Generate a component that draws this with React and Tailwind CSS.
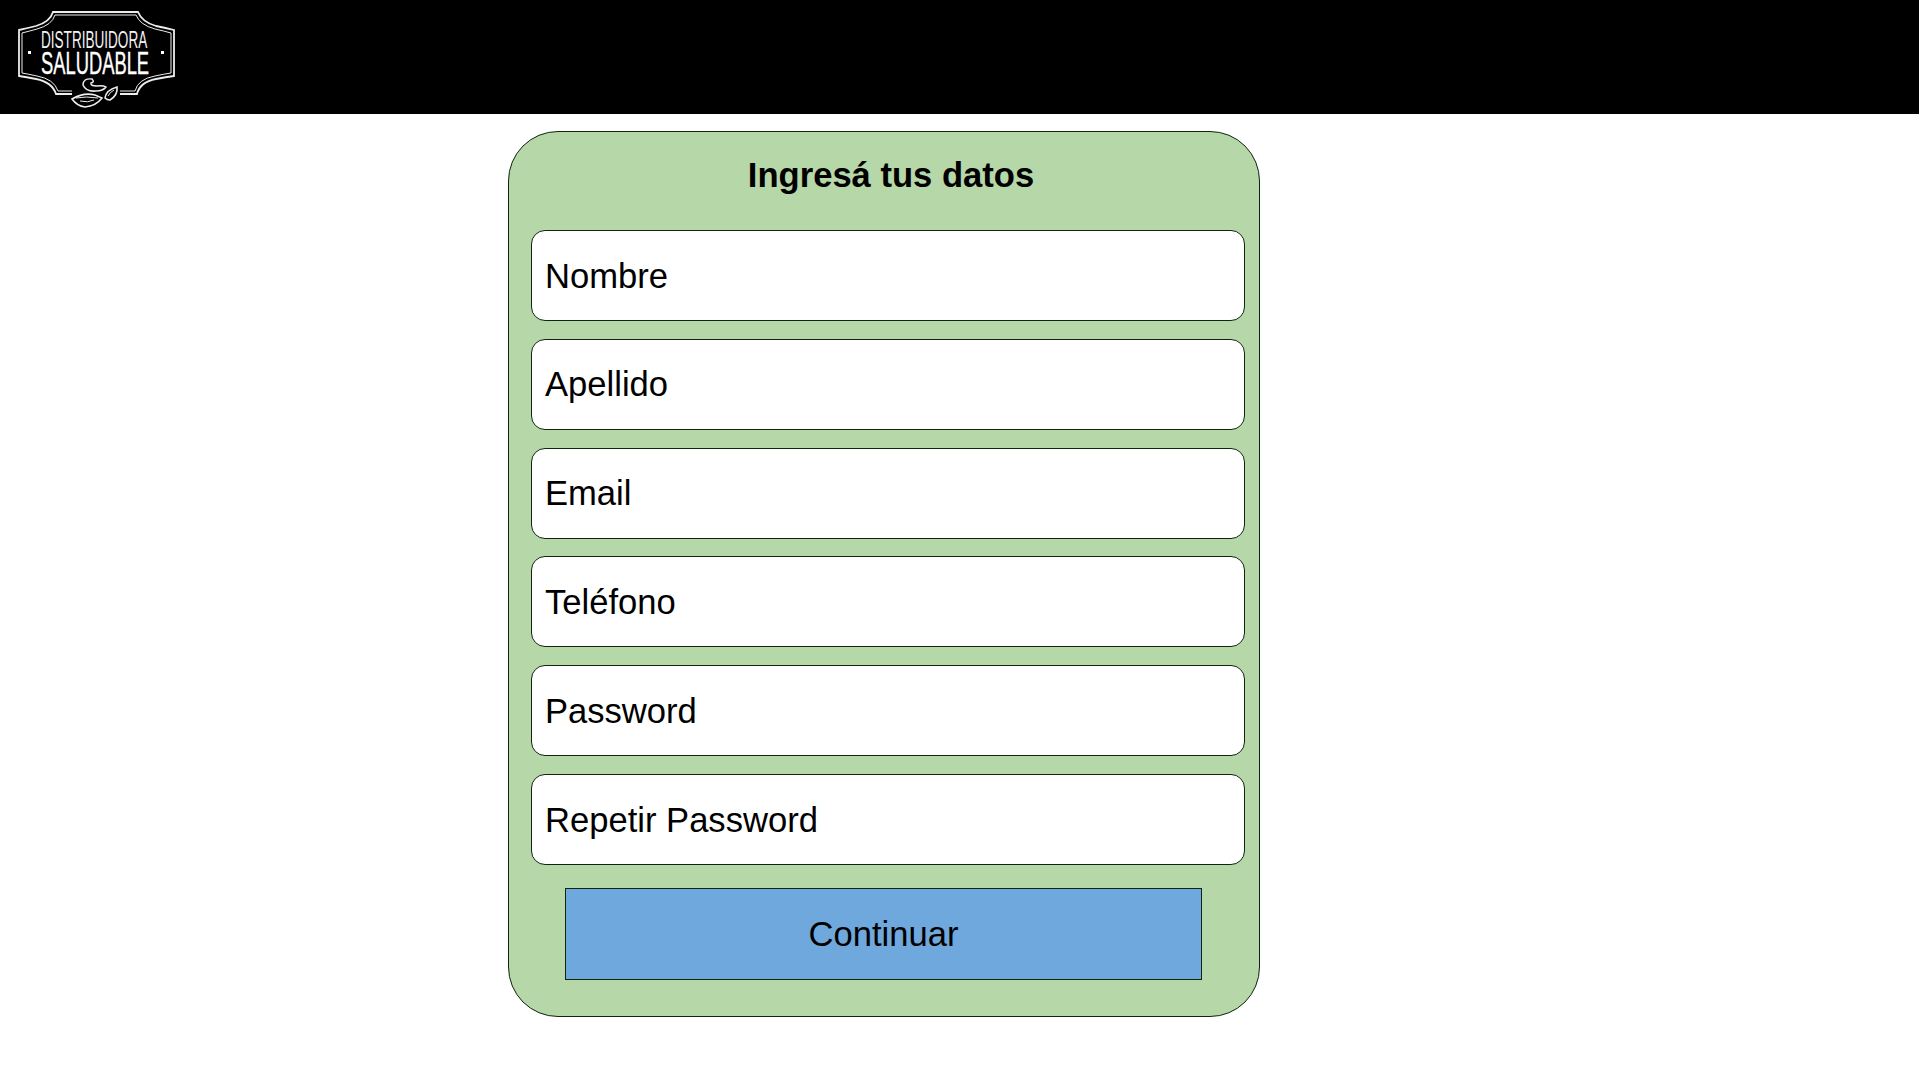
const fields = ["Nombre", "Apellido", "Email", "Teléfono", "Password", "Repetir Password"];

const Logo = () => (
  <svg viewBox="0 0 180 114" className="block w-[180px] h-[114px]" fill="none" stroke="#ededed">
    {/* outer and inner frame */}
    <path
      d="M72 94 H56 Q52 82 36 79 Q26 77 19 76 V30 Q28 28 36 26 Q50 22 53 12 H138 Q142 22 156 26 Q166 28 174 30 V76 Q166 77 156 79 Q140 82 137 94 H120"
      strokeWidth="1.8"
    />
    <path
      d="M72 91 H58 Q54 79 37 76 Q28 74 22 73 V33 Q30 31 37 29 Q52 25 55 15 H136 Q140 25 155 29 Q164 31 171 33 V73 Q164 74 155 76 Q138 79 135 91 H120"
      strokeWidth="1"
    />
    <rect x="28" y="51" width="3" height="3" fill="#fff" stroke="none" />
    <rect x="161" y="51" width="3" height="3" fill="#fff" stroke="none" />
    <text transform="translate(41 48) scale(0.59 1)" fontSize="23" fill="#f2f2f2" stroke="none" fontFamily="'Liberation Sans', sans-serif">
      DISTRIBUIDORA
    </text>
    <text transform="translate(41 74) scale(0.592 1)" fontSize="31" fill="#fff" stroke="#fff" strokeWidth="0.4" fontFamily="'Liberation Sans', sans-serif">
      SALUDABLE
    </text>
    {/* cashew and almonds */}
    <path d="M92 79 Q83 78 83 85 Q86 92 96 91 Q103 91 106 87 Q103 85 97 86 Q90 86 91 83 Q95 82 92 79 Z" strokeWidth="1.5" />
    <path d="M72 99 Q84 92 95 95 L102 98 Q96 106 85 107 Q77 106 72 99 Z" strokeWidth="1.6" />
    <path d="M76 98 Q86 96 98 98 M80 101 Q88 103 94 100" strokeWidth="1" />
    <path d="M105 98 Q106 90 117 87 Q118 95 110 100 Q107 100 105 98 Z" strokeWidth="1.6" />
    <path d="M108 96 Q110 92 114 90" strokeWidth="1" />
  </svg>
);

const App = () => {
  return (
    <div className="min-h-screen bg-white text-black font-['Liberation_Sans',Arial,sans-serif]">
      <header className="h-[114px] bg-black">
        <Logo />
      </header>
      <main className="pt-[17px] pl-[508px]">
        <form className="w-[752px] h-[886px] rounded-[50px] border border-[#10240f] bg-[#b6d7a8] pt-[23px] pl-[22px] pr-[14px]">
          <h1 className="h-[40px] pl-[6px] text-center text-[34.6px] leading-[40px] font-bold">Ingresá tus datos</h1>
          <div className="mt-[35px] flex flex-col gap-[17.8px]">
            {fields.map((field) => (
              <div
                key={field}
                className="flex h-[91px] items-center rounded-[14px] border border-[#10240f] bg-white pt-[2px] pl-[13px] text-[34.6px]"
              >
                {field}
              </div>
            ))}
          </div>
          <button
            type="button"
            className="mt-[23px] ml-[34px] block h-[92px] w-[637px] border border-[#10240f] bg-[#6fa8dc] pt-[2px] text-[34.6px]"
          >
            Continuar
          </button>
        </form>
      </main>
    </div>
  );
};

export default App;
